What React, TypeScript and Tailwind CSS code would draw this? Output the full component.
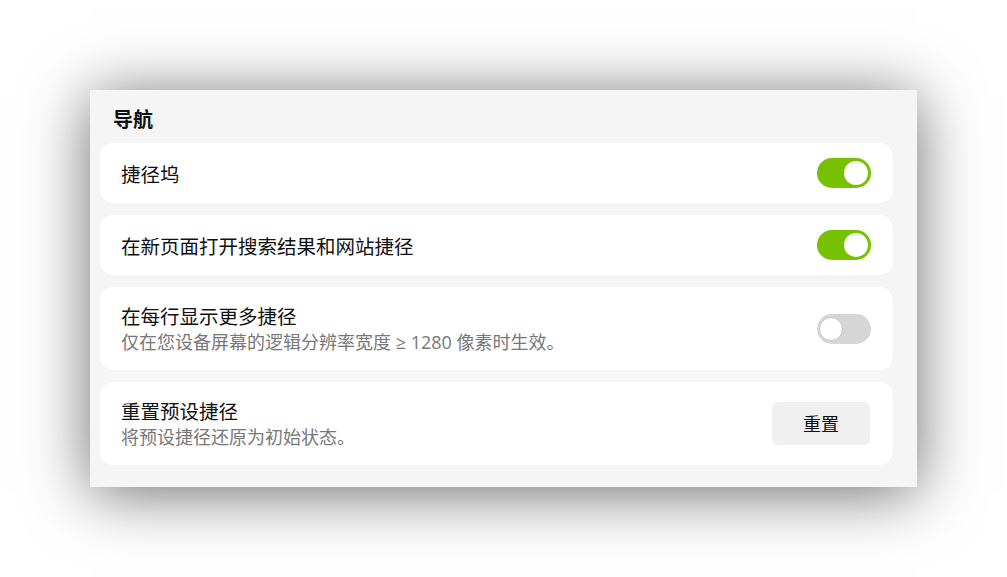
import React, { useState } from 'react';

const font = { fontFamily: '"Noto Sans CJK SC", "Noto Sans", sans-serif' };
const descFont = { fontFamily: '"Open Sans", "Noto Sans CJK SC", sans-serif' };

function Toggle({ on, onChange }: { on: boolean; onChange: () => void }) {
  return (
    <button
      onClick={onChange}
      className={`relative w-[54px] h-[30px] rounded-full shrink-0 ${on ? 'bg-[#76c100]' : 'bg-[#d6d6d6]'}`}
    >
      <span
        className={`absolute top-[3px] w-[24px] h-[24px] rounded-full bg-white ${on ? 'left-[27px]' : 'left-[2px] border border-[#c4c4c4]'}`}
      />
    </button>
  );
}

function Row({ title, desc, children }: { title: string; desc?: string; children: React.ReactNode }) {
  return (
    <div className={`flex items-center justify-between bg-white rounded-[14px] pl-[21px] pr-[22px] ${desc ? 'h-[83px]' : 'h-[60px]'}`}>
      <div className="flex flex-col">
        <div className="text-[19.5px] leading-[27px] text-[#111]">{title}</div>
        {desc && (
          <div className="text-[18px] leading-[26px] text-[#777]" style={descFont}>
            {desc}
          </div>
        )}
      </div>
      {children}
    </div>
  );
}

export default function App() {
  const [dock, setDock] = useState(true);
  const [newPage, setNewPage] = useState(true);
  const [more, setMore] = useState(false);

  return (
    <div className="w-full h-[577px] bg-white flex items-center justify-center" style={font}>
      <div className="w-[827px] h-[397px] bg-[#f5f5f5] shadow-[0_6px_60px_rgba(0,0,0,0.58)] pl-[10px] pr-[24px] flex flex-col">
        <h2 className="h-[53px] pt-[14px] pl-[13px] text-[20px] leading-[30px] font-bold text-[#111]">导航</h2>
        <div className="flex flex-col gap-[12px]">
          <Row title="捷径坞">
            <Toggle on={dock} onChange={() => setDock(!dock)} />
          </Row>
          <Row title="在新页面打开搜索结果和网站捷径">
            <Toggle on={newPage} onChange={() => setNewPage(!newPage)} />
          </Row>
          <Row title="在每行显示更多捷径" desc="仅在您设备屏幕的逻辑分辨率宽度 ≥ 1280 像素时生效。">
            <Toggle on={more} onChange={() => setMore(!more)} />
          </Row>
          <Row title="重置预设捷径" desc="将预设捷径还原为初始状态。">
            <button className="w-[98px] h-[43px] rounded-[6px] bg-[#f0f0f0] text-[18px] font-normal text-[#111] mr-[1px]">
              重置
            </button>
          </Row>
        </div>
      </div>
    </div>
  );
}
